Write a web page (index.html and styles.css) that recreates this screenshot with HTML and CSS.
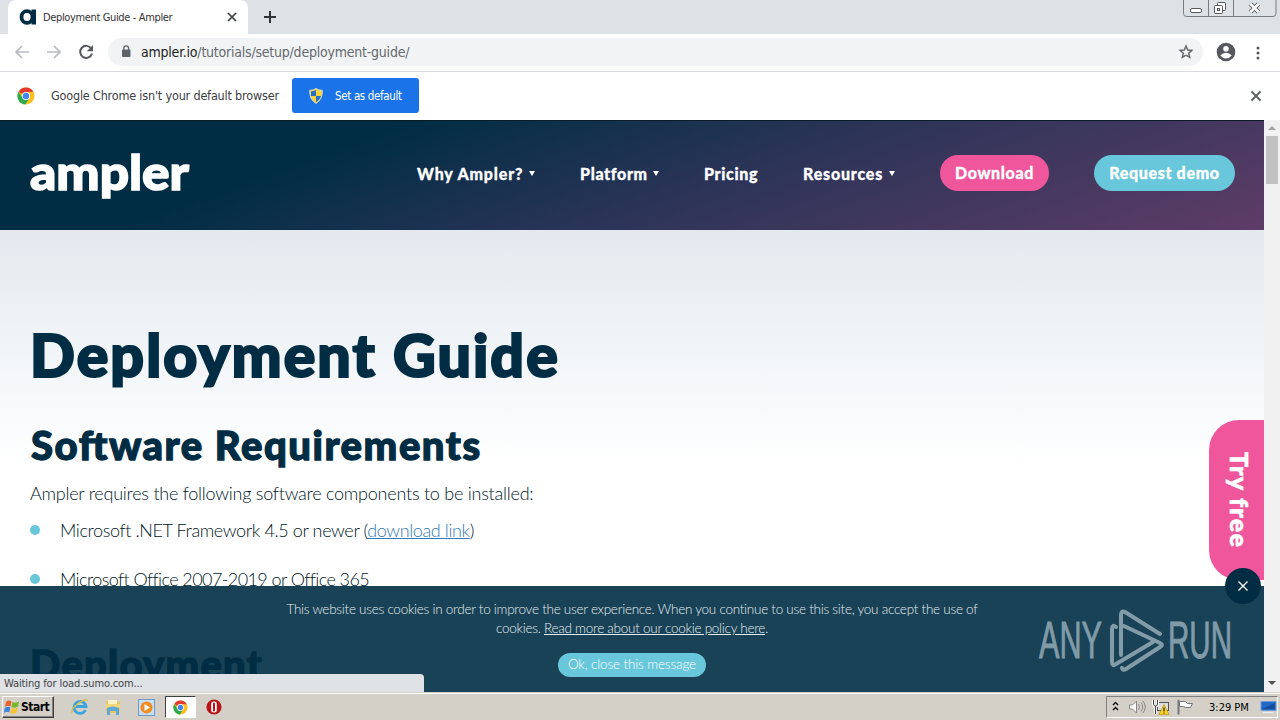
FILE: index.html
```html
<!DOCTYPE html>
<html lang="en">
<head>
<meta charset="utf-8">
<meta name="viewport" content="width=device-width, initial-scale=1">
<title>Deployment Guide - Ampler</title>
<link rel="stylesheet" href="styles.css">
</head>
<body>
<div class="screen">

<div class="tabstrip">
  <div class="tab">
    <svg class="favicon" width="17" height="16" viewBox="0 0 17 16"><ellipse cx="8" cy="8" rx="5.500" ry="5.900" fill="none" stroke="#002d44" stroke-width="3.800"/><path d="M12.500 .5H17V15.500H12.500z" fill="#002d44"/></svg>
    <span class="tab-title">Deployment Guide - Ampler</span>
    <svg class="tab-close" width="10" height="10" viewBox="0 0 10 10"><path d="M1 1l8 8M9 1l-8 8" stroke="#3c4043" stroke-width="1.700"/></svg>
  </div>
  <svg class="new-tab" width="14" height="14" viewBox="0 0 14 14"><path d="M7 1v12M1 7h12" stroke="#303337" stroke-width="2"/></svg>
  <div class="window-buttons">
    <svg width="96" height="17" viewBox="0 0 96 17"><path d="M.5 0V13.500q0 3 3 3H90q3 0 3-3V0M25.500 0V16.500M50.500 0V16.500" fill="none" stroke="#777b82"/><rect x="7.500" y="8.500" width="11" height="4" rx="1.500" fill="#fff" stroke="#55585f"/><rect x="34.500" y="2.500" width="8" height="8" rx="1" fill="#fff" stroke="#55585f"/><rect x="31.500" y="5.500" width="8" height="8" rx="1" fill="#fff" stroke="#55585f"/><rect x="34.500" y="8.500" width="2" height="2" fill="none" stroke="#55585f"/><path d="M67.500 4l8 8M75.500 4l-8 8" stroke="#55585f" stroke-width="4.500"/><path d="M67.500 4l8 8M75.500 4l-8 8" stroke="#fff" stroke-width="2.600"/></svg>
  </div>
</div>

<div class="toolbar">
  <svg class="nav-icon" width="16" height="16" viewBox="0 0 16 16"><path d="M15 8H2M8 2L2 8l6 6" fill="none" stroke="#b9bbbe" stroke-width="1.700"/></svg>
  <svg class="nav-icon" width="16" height="16" viewBox="0 0 16 16"><path d="M1 8h13M8 2l6 6-6 6" fill="none" stroke="#b9bbbe" stroke-width="1.700"/></svg>
  <svg class="nav-icon" width="16" height="16" viewBox="0 0 16 16"><path d="M13.200 4.500A6 6 0 1 0 14 9.500" fill="none" stroke="#55585c" stroke-width="2"/><path d="M15 1v6.200H8.800z" fill="#55585c"/></svg>
  <div class="omnibox">
    <svg width="10" height="13" viewBox="0 0 10 13"><rect x="1" y="4.500" width="8.500" height="7.500" rx="1" fill="#5f6368"/><path d="M2.800 5V3.300a2.400 2.400 0 0 1 4.800 0V5" fill="none" stroke="#5f6368" stroke-width="1.300"/></svg>
    <span class="url"><b>ampler.io</b>/tutorials/setup/deployment-guide/</span>
    <svg class="star" width="16" height="16" viewBox="0 0 16 16"><path d="M8 2l1.700 4 4.200.4-3.200 2.800 1 4.200L8 11.200l-3.700 2.200 1-4.200L2.100 6.400l4.200-.4z" fill="none" stroke="#5f6368" stroke-width="1.400"/></svg>
  </div>
  <svg class="profile" width="20" height="20" viewBox="0 0 20 20"><circle cx="10" cy="10" r="9.300" fill="#55585c"/><circle cx="10" cy="6.800" r="2.800" fill="#fff"/><path d="M4.300 13.500q2-2.700 5.700-2.700t5.700 2.700Q13.500 16.500 10 16.500T4.300 13.500z" fill="#fff"/></svg>
  <svg class="menu" width="4" height="14" viewBox="0 0 4 14"><g fill="#55585c"><circle cx="2" cy="2" r="1.500"/><circle cx="2" cy="7" r="1.500"/><circle cx="2" cy="12" r="1.500"/></g></svg>
</div>

<div class="infobar">
  <svg class="chrome-logo" width="18" height="18" viewBox="0 0 18 18"><circle cx="9" cy="9" r="8.500" fill="#fbc116"/><path d="M9 9L1.600 4.700A8.500 8.500 0 0 1 16.400 5H9z" fill="#e33b2e"/><path d="M1.600 4.700A8.500 8.500 0 0 0 8.300 17.500L12.500 11 9 13 5.500 11z" fill="#2da94f"/><circle cx="9" cy="9" r="4.100" fill="#fff"/><circle cx="9" cy="9" r="3.200" fill="#4285f4"/></svg>
  <span class="info-text">Google Chrome isn't your default browser</span>
  <div class="default-button">
    <svg width="14" height="16" viewBox="0 0 14 16"><path d="M7 .5Q10 2.500 13.300 2.300 14 11 7 15.500 0 11 .7 2.300 4 2.500 7 .5z" fill="#f8d43a" stroke="#c7d2da"/><path d="M7 2Q4.500 3.300 2 3.500V8h5zM7 8h5Q11.200 11.500 7 14.200z" fill="#276fc9"/></svg>
    <span>Set as default</span>
  </div>
  <svg class="info-close" width="12" height="12" viewBox="0 0 12 12"><path d="M1.500 1.500l9 9M10.500 1.500l-9 9" stroke="#5f6368" stroke-width="2"/></svg>
</div>

<div class="viewport">
  <div class="page">
    <div class="header">
      <svg class="logo" width="162" height="60" viewBox="0 0 162 60"><text x="0" y="46.500" textLength="159" lengthAdjust="spacingAndGlyphs">ampler</text></svg>
      <div class="nav">
        <span class="nav-item why">Why Ampler?<i></i></span>
        <span class="nav-item platform">Platform<i></i></span>
        <span class="nav-item pricing">Pricing</span>
        <span class="nav-item resources">Resources<i></i></span>
        <span class="pill download">Download</span>
        <span class="pill demo">Request demo</span>
      </div>
    </div>
    <div class="content">
      <h1>Deployment Guide</h1>
      <h2 class="requirements">Software Requirements</h2>
      <p>Ampler requires the following software components to be installed:</p>
      <ul>
        <li><span class="item-net">Microsoft .NET Framework 4.5 or newer (<a>download link</a>)</span></li>
        <li><span class="item-office">Microsoft Office 2007-2019 or Office 365</span></li>
      </ul>
      <h2 class="deployment">Deployment</h2>
    </div>

    <div class="try-free"><span>Try free</span></div>
    <div class="cookies">
      <span class="line1">This website uses cookies in order to improve the user experience. When you continue to use this site, you accept the use of</span>
      <span class="line2">cookies. <u>Read more about our cookie policy here</u>.</span>
      <span class="ok">Ok, close this message</span>
    </div>
    <div class="try-close"><svg width="12" height="12" viewBox="0 0 12 12"><path d="M1.500 1.500l9 9M10.500 1.500l-9 9" stroke="#fff" stroke-width="1.400"/></svg></div>
    <svg class="anyrun" width="200" height="70" viewBox="0 0 200 70">
      <text x="3" y="53" textLength="63" lengthAdjust="spacingAndGlyphs">ANY</text>
      <g fill="none" stroke-width="4" stroke-linecap="round" stroke-linejoin="round"><path d="M80 22q-4-3-4 2V57q0 5 4 2L117 37"/><path d="M124 29L89 7q-4-2-4 3V50M88 21L124 38q4 2 0 4L90 64q-3 2-4-1"/></g>
      <text x="132" y="53" textLength="64" lengthAdjust="spacingAndGlyphs">RUN</text>
    </svg>
    <div class="status">Waiting for load.sumo.com...</div>
  </div>
  <div class="scrollbar"><i class="up"></i><div class="thumb"></div><i class="down"></i></div>
</div>

<div class="taskbar">
  <div class="start"><svg width="16" height="16" viewBox="0 0 16 16"><path d="M2 3Q5 .5 7.500 2.500L6.500 7.500Q4 6 1 8z" fill="#e8602c"/><path d="M8.500 3Q12 4.500 15 2.500L14 7.500Q11 9.500 7.500 8z" fill="#75b82c"/><path d="M.8 9Q4 7 6.300 8.500L5.300 13.500Q3 12 0 14z" fill="#3c83db"/><path d="M7.300 9Q11 10.500 13.800 8.500L12.700 13.500Q10 15.500 6.300 14z" fill="#f7c52d"/></svg><span>Start</span></div>
  <svg class="task ie" width="18" height="18" viewBox="0 0 18 18"><path d="M14.500 12A6 6 0 1 1 15 8.500H5" fill="none" stroke="#3ba4df" stroke-width="2.800"/><path d="M1 15C-1 10 14-1 16.500 2.500" fill="none" stroke="#e3bd3a" stroke-width="1.300"/></svg>
  <svg class="task folder" width="18" height="18" viewBox="0 0 18 18"><path d="M2 3h5l1 1h8v11H2z" fill="#e6c75f"/><path d="M4 2h9v6H4z" fill="#fbf2c4"/><path d="M2 6h14v4H2z" fill="#f2d878"/><path d="M3 10q6-3 12 0v7h-3v-4H6v4H3z" fill="#5fa9d8"/></svg>
  <svg class="task media" width="17" height="17" viewBox="0 0 17 17"><rect x=".5" y=".5" width="16" height="16" fill="#c8def3" stroke="#6b9bce"/><circle cx="8.500" cy="8.500" r="6" fill="#f28b20"/><path d="M6.500 5v7l5.500-3.500z" fill="#fff"/></svg>
  <div class="active-task"><svg width="15" height="15" viewBox="0 0 18 18"><circle cx="9" cy="9" r="8.500" fill="#fbc116"/><path d="M9 9L1.600 4.700A8.500 8.500 0 0 1 16.400 5H9z" fill="#e33b2e"/><path d="M1.600 4.700A8.500 8.500 0 0 0 8.300 17.500L12.500 11 9 13 5.500 11z" fill="#2da94f"/><circle cx="9" cy="9" r="4.100" fill="#fff"/><circle cx="9" cy="9" r="3.200" fill="#4285f4"/></svg></div>
  <svg class="task opera" width="16" height="16" viewBox="0 0 16 16"><circle cx="8" cy="8" r="7.600" fill="#b81519"/><rect x="5.200" y="2.500" width="5.600" height="11" rx="2.500" fill="#fff"/><rect x="7" y="3.500" width="2" height="9" rx="1" fill="#b81519"/></svg>
  <div class="tray">
    <svg width="90" height="18" viewBox="0 0 90 18"><path d="M6 7l2.500-2.500L11 7M6 12l2.500-2.500L11 12" fill="none" stroke="#000" stroke-width="1.300"/><path d="M22.500 7h3l4-4v12l-4-4h-3z" fill="#fff" stroke="#888"/><path d="M31.500 6q2 3 0 6M34 4.500q3.500 4.500 0 9M36 3q4.500 6 0 12" fill="none" stroke="#8b8b8b"/><rect x="50.500" y="4.500" width="11" height="8" fill="#ddd" stroke="#555"/><path d="M46.500 2v4q0 2 2 2V16M50.500 2v4q0 2-2 2" fill="none" stroke="#fff" stroke-width="3"/><path d="M46.500 2v4q0 2 2 2V16M50.500 2v4q0 2-2 2" fill="none" stroke="#444"/><path d="M57 6.500l5 10H52z" fill="#ffd51e" stroke="#b39215" stroke-width=".7"/><path d="M57 9.500v4M57 14.500v1" stroke="#222" stroke-width="1.200"/><path d="M71.500 2v14.500" stroke="#777" stroke-width="2"/><path d="M72.500 3.500h6l2 2h5l-2 4h-5l-2-1h-4z" fill="#fff" stroke="#777"/></svg>
    <span>3:29 PM</span>
    <svg class="desktop" width="17" height="14" viewBox="0 0 17 14"><path d="M1 1.500h15v9H1z" fill="#2368c4" stroke="#6c9cda"/><path d="M2 9L15 3v6z" fill="#174c9e"/><path d="M3 12h10l1 1H3z" fill="#e7edf5"/></svg>
  </div>
</div>

</div>
</body>
</html>
```

FILE: styles.css
```css
body {
  margin: 0;
  font-family: Lato, sans-serif;
  background: #fff;
}
svg {
  display: block;
  flex: none;
  overflow: visible;
}
.screen {
  width: 1280px;
  height: 720px;
  overflow: hidden;
  display: flex;
  flex-direction: column;
}
.tabstrip, .toolbar, .infobar, .status, .taskbar {
  font-family: "DejaVu Sans Condensed", "DejaVu Sans", sans-serif;
  font-stretch: condensed;
  white-space: nowrap;
}

/* browser chrome */
.tabstrip {
  height: 34px;
  background: #dee1e6;
  display: flex;
  padding-left: 8px;
}
.tab {
  width: 240px;
  box-sizing: border-box;
  background: #fff;
  border-radius: 8px 8px 0 0;
  display: flex;
  align-items: center;
  padding: 0 11px;
}
.tab-title {
  font-size: 11px;
  letter-spacing: -.36px;
  margin-left: 7px;
  color: #333;
  flex: 1;
}
.new-tab {
  margin: 10px 0 0 15px;
}
.window-buttons {
  margin-left: auto;
  width: 97px;
}
.toolbar {
  height: 37px;
  border-bottom: 1px solid #d9dbde;
  display: flex;
  align-items: center;
  padding-left: 14px;
}
.nav-icon {
  position: relative;
  top: -1px;
  margin-right: 16px;
}
.omnibox {
  margin: -2px 0 0 -2px;
  width: 1095px;
  height: 28px;
  border-radius: 14px;
  background: #f1f3f4;
  display: flex;
  align-items: center;
  box-sizing: border-box;
  padding: 0 9px 0 13px;
}
.url {
  flex: 1;
  margin-left: 10px;
  font-size: 14px;
  letter-spacing: -.22px;
  color: #66696d;
}
.url b {
  font-weight: normal;
  color: #222;
}
.profile {
  margin: -2px 0 0 13px;
}
.menu {
  margin-left: 20px;
}
.infobar {
  height: 48px;
  box-sizing: border-box;
  display: flex;
  align-items: center;
  padding: 0 18px 1px 17px;
}
.info-text {
  width: 241px;
  margin-left: 16px;
  font-size: 12.500px;
  letter-spacing: -.18px;
  color: #3c4043;
}
.default-button {
  width: 127px;
  height: 35px;
  box-sizing: border-box;
  padding-left: 17px;
  border-radius: 3px;
  background: #1a73e8;
  color: #fff;
  font-size: 11.500px;
  letter-spacing: -.35px;
  display: flex;
  align-items: center;
  gap: 12px;
}
.info-close {
  margin-left: auto;
}

/* web page */
.viewport {
  height: 572px;
  display: flex;
}
.page {
  position: relative;
  width: 1264px;
  height: 572px;
  overflow: hidden;
}
.header {
  height: 110px;
  box-sizing: border-box;
  border-top: 1px solid #0b1c29;
  background: linear-gradient(160deg, #002d44 0%, #002d44 26%, #2c3458 57%, #5e3c67 100%);
  display: flex;
  align-items: center;
  padding: 0 29px 5px 30px;
}
.logo text {
  font-family: Lato, sans-serif;
  font-weight: 900;
  font-size: 48px;
  fill: #fff;
  stroke: #fff;
  stroke-width: 1.500px;
}
.nav {
  margin-left: auto;
  display: flex;
  align-items: center;
  gap: 45px;
  color: #fff;
  font-size: 16px;
  font-weight: 900;
  letter-spacing: .65px;
  white-space: nowrap;
  -webkit-text-stroke: .3px #fff;
}
.nav-item {
  display: flex;
  align-items: center;
  justify-content: space-between;
  line-height: 35px;
  height: 36px;
}
.nav-item i {
  border: 3.500px solid transparent;
  border-top: 5px solid #fff;
  border-bottom: 0;
}
.why {
  width: 118px;
  letter-spacing: .85px;
}
.platform { width: 79px; }
.pricing { width: 54px; }
.resources {
  width: 92px;
  letter-spacing: .8px;
}
.pill {
  height: 36px;
  line-height: 35px;
  border-radius: 18px;
  text-align: center;
}
.download {
  width: 109px;
  background: #f0569b;
}
.demo {
  width: 141px;
  background: #68c7da;
}
.content {
  height: 462px;
  padding: 0 30px;
  background: linear-gradient(#e4e9ef, #f7f9fb 170px, #fff 235px);
  color: #002d44;
  overflow: hidden;
}
h1, h2 {
  margin: 0;
  font-weight: 900;
  white-space: nowrap;
  font-feature-settings: "liga";
  -webkit-text-stroke: 1.300px #002d44;
}
h1 {
  padding-top: 89px;
  font-size: 59px;
  line-height: 72px;
  letter-spacing: 2.100px;
  -webkit-text-stroke-width: 2.200px;
}
h2 {
  font-size: 40px;
  line-height: 48px;
  letter-spacing: 1.550px;
}
.requirements {
  margin: 30px 0 0 1px;
}
p {
  margin: 12px 0 0;
  font-size: 18px;
  line-height: 24px;
  font-weight: 300;
  letter-spacing: -.24px;
  color: #001825;
}
ul {
  margin: 13px 0 0;
  padding: 0;
  list-style: none;
  font-size: 18px;
  line-height: 24px;
  font-weight: 300;
  color: #001825;
}
.item-net { letter-spacing: -.38px; }
.item-office { letter-spacing: -.59px; }
li {
  display: flex;
  align-items: center;
  margin-bottom: 25px;
}
li::before {
  content: "";
  width: 10px;
  height: 10px;
  border-radius: 5px;
  margin-right: 20px;
  background: #68c7da;
}
li a {
  color: #337ab7;
  text-decoration: underline;
}
.deployment {
  margin-top: 49px;
  letter-spacing: 1.200px;
}
.cookies {
  position: absolute;
  left: 0;
  bottom: 0;
  width: 1264px;
  height: 106px;
  background: rgba(0, 45, 68, .9);
  color: #e2edf2;
  font-size: 13.500px;
  line-height: 19px;
  font-weight: 300;
  letter-spacing: -.26px;
  display: flex;
  flex-direction: column;
  align-items: center;
  box-sizing: border-box;
  padding-top: 14px;
  white-space: nowrap;
}
.line2 { letter-spacing: -.26px; }
.ok {
  width: 148px;
  height: 24px;
  line-height: 22px;
  margin-top: 15px;
  border-radius: 12px;
  background: #68c7da;
  color: #fff;
  letter-spacing: -.14px;
  text-align: center;
}
.try-free {
  position: absolute;
  right: 0;
  top: 300px;
  width: 55px;
  height: 160px;
  box-sizing: border-box;
  padding-left: 7px;
  border-radius: 30px 0 0 30px;
  background: #f0569b;
  color: #fff;
  display: flex;
  align-items: center;
  justify-content: center;
  font-size: 25px;
  letter-spacing: 1.300px;
  font-weight: 900;
  -webkit-text-stroke: .6px #fff;
}
.try-free span {
  writing-mode: vertical-rl;
}
.try-close {
  position: absolute;
  left: 1225px;
  top: 448px;
  width: 36px;
  height: 36px;
  border-radius: 50%;
  background: #002d44;
  display: flex;
  align-items: center;
  justify-content: center;
}
.anyrun {
  position: absolute;
  left: 1036px;
  top: 485px;
  opacity: .55;
  stroke: #d8e4ec;
}
.anyrun text {
  font-family: "Liberation Sans", sans-serif;
  font-size: 52px;
  fill: #d8e4ec;
  stroke-width: .8px;
}
.status {
  position: absolute;
  left: 0;
  bottom: 0;
  width: 424px;
  height: 18px;
  line-height: 19px;
  box-sizing: border-box;
  padding-left: 4px;
  border-radius: 0 4px 0 0;
  background: #dee1e6;
  color: #444;
  font-size: 11px;
  letter-spacing: -.12px;
}
.scrollbar {
  width: 16px;
  background: #f1f1f1;
  display: flex;
  flex-direction: column;
  align-items: center;
}
.scrollbar i {
  border: 4px solid transparent;
}
.scrollbar .up {
  margin-top: 2px;
  border-bottom-color: #a3a3a3;
}
.thumb {
  width: 12px;
  height: 48px;
  margin: 6px 0 auto;
  background: #c1c1c1;
}
.scrollbar .down {
  margin-bottom: 3px;
  border-top-color: #505050;
}

/* taskbar */
.taskbar {
  height: 28px;
  box-sizing: border-box;
  border-top: 1px solid #d4d0c8;
  box-shadow: inset 0 1px #fff;
  background: #d4d0c8;
  display: flex;
  align-items: center;
  padding: 1px 2px 0;
}
.start {
  width: 52px;
  height: 22px;
  box-sizing: border-box;
  border: 1px solid;
  border-color: #fff #404040 #404040 #fff;
  box-shadow: inset -1px -1px #808080;
  display: flex;
  align-items: center;
  gap: 1px;
  padding-left: 1px;
  font-size: 12px;
  font-weight: bold;
  letter-spacing: -.5px;
}
.ie { margin-left: 17px; }
.folder { margin-left: 15px; }
.media { margin-left: 16px; }
.active-task {
  width: 31px;
  height: 22px;
  box-sizing: border-box;
  margin-left: 10px;
  border: 1px solid;
  border-color: #404040 #fff #fff #404040;
  background: #fff;
  display: flex;
  align-items: center;
  justify-content: center;
}
.opera { margin-left: 10px; }
.tray {
  width: 172px;
  height: 22px;
  box-sizing: border-box;
  margin-left: auto;
  border: 1px solid;
  border-color: #808080 #fff #fff #808080;
  display: flex;
  align-items: center;
  font-size: 11px;
}
.tray span {
  width: 40px;
  margin-left: 12px;
}
.desktop { margin-left: 11px; }
```
